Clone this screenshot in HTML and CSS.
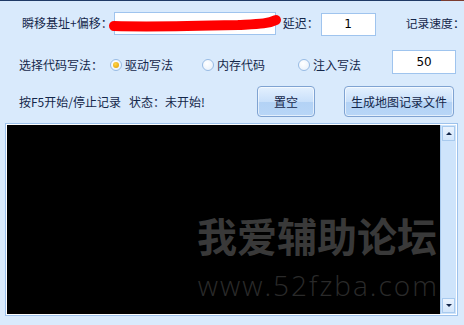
FILE: index.html
```html
<!DOCTYPE html>
<html lang="zh-CN">
<head>
  <meta charset="UTF-8">
  <title>记录工具</title>
  <link rel="stylesheet" href="styles.css">
</head>
<body>
  <div class="topline"><span class="left"></span><span class="right"></span></div>

  <div class="row row-one">
    <label class="lbl lbl-addr">瞬移基址+偏移：</label>
    <div class="addr-wrap">
      <input class="box box-addr" type="text" value="">
      <svg class="scribble" width="176" height="24" viewBox="0 0 176 24">
        <path d="M6 14 C40 15 90 14 130 13 C150 12 160 12 168 8" fill="none" stroke="#ff0000" stroke-width="10" stroke-linecap="round"/>
      </svg>
    </div>
    <label class="lbl lbl-delay">延迟：</label>
    <input class="box box-delay" type="text" value="1">
    <label class="lbl lbl-speed">记录速度：</label>
  </div>

  <div class="row row-two">
    <label class="lbl lbl-mode">选择代码写法：</label>
    <span class="radio checked"></span><span class="lbl opt">驱动写法</span>
    <span class="radio r2"></span><span class="lbl opt">内存代码</span>
    <span class="radio r3"></span><span class="lbl opt">注入写法</span>
    <input class="box box-speed" type="text" value="50">
  </div>

  <div class="row row-three">
    <span class="lbl lbl-hint">按F5开始/停止记录</span>
    <span class="lbl lbl-state">状态：未开始!</span>
    <button class="btn btn-clear">置空</button>
    <button class="btn btn-make">生成地图记录文件</button>
  </div>

  <div class="log">
    <div class="log-body">
      <div class="mark-cn">我爱辅助论坛</div>
      <div class="mark-url">www.52fzba.com</div>
    </div>
    <div class="scroll">
      <span class="sbtn up"><i></i></span>
      <span class="sbtn down"><i></i></span>
    </div>
  </div>
</body>
</html>
```

FILE: styles.css
```css
html, body {
  margin: 0;
  padding: 0;
}

body {
  width: 464px;
  height: 325px;
  overflow: hidden;
  background: #d9eafc;
  color: #14274a;
  font-family: "Noto Sans CJK JP", "Noto Sans CJK SC", "DejaVu Sans", sans-serif;
  font-size: 12px;
  white-space: nowrap;
}

.topline {
  display: flex;
  height: 1px;
}

.topline .left {
  width: 441px;
  background: #1f3a66;
}

.topline .right {
  flex: 1;
  background: #7b3c30;
}

.row {
  display: flex;
  align-items: center;
}

.lbl {
  line-height: 16px;
}

.box {
  box-sizing: border-box;
  height: 23px;
  border: 1px solid #9fc4ee;
  background: #fff;
  padding: 0;
  margin: 0;
  font-family: "DejaVu Sans", sans-serif;
  font-size: 12px;
  color: #000;
  text-align: center;
  outline: none;
}

/* row one */
.row-one {
  margin-top: 10px;
  height: 24px;
  padding-left: 22px;
}

.addr-wrap {
  position: relative;
  margin-left: 1px;
}

.box-addr {
  display: block;
  width: 162px;
}

.scribble {
  position: absolute;
  left: -6px;
  top: 0;
}

.lbl-delay {
  margin-left: 7px;
}

.box-delay {
  margin-left: 2px;
  width: 55px;
  margin-top: 2px;
}

.lbl-speed {
  margin-left: 30px;
  font-size: 11.8px;
}

/* row two */
.row-two {
  margin-top: 15px;
  height: 24px;
  padding-left: 19px;
}

.lbl-mode {
  width: 91px;
  margin-top: 6px;
}

.radio {
  box-sizing: border-box;
  width: 12px;
  height: 12px;
  border-radius: 50%;
  border: 1px solid #98bbe4;
  background: radial-gradient(circle at 40% 35%, #ffffff, #e4eefa);
  margin-top: 6px;
  display: flex;
  align-items: center;
  justify-content: center;
}

.radio.checked::after {
  content: "";
  width: 6px;
  height: 6px;
  border-radius: 50%;
  background: radial-gradient(circle at 40% 35%, #ffd54a, #e09a00);
}

.opt {
  margin-left: 3px;
  margin-top: 6px;
}

.r2 {
  margin-left: 29px;
}

.r3 {
  margin-left: 33px;
}

.box-speed {
  margin-left: 31px;
  width: 64px;
  height: 24px;
  font-size: 12px;
}

/* row three */
.row-three {
  margin-top: 12px;
  height: 31px;
  padding-left: 19px;
}

.lbl-hint {
  margin-top: 1px;
}

.lbl-state {
  margin-left: 8px;
  margin-top: 1px;
}

.btn {
  box-sizing: border-box;
  height: 31px;
  border: 1px solid #7fa3d2;
  border-radius: 4px;
  background: linear-gradient(#e3f0fe 0%, #c9e0fa 50%, #b3d2f5 51%, #b8d6f7 100%);
  color: #14274a;
  font-family: "Noto Sans CJK JP", "Noto Sans CJK SC", sans-serif;
  font-size: 12px;
  padding: 0;
  box-shadow: inset 0 0 0 1px rgba(255, 255, 255, 0.6);
}

.btn-clear {
  width: 58px;
  margin-left: 52px;
}

.btn-make {
  width: 110px;
  margin-left: 29px;
}

/* log area */
.log {
  box-sizing: border-box;
  display: flex;
  margin: 6px 0 0 5px;
  width: 453px;
  height: 193px;
  border: 1px solid #9dc2ec;
  background: #fff;
  padding: 1px;
}

.log-body {
  flex: 1;
  background: #000;
  display: flex;
  flex-direction: column;
  align-items: flex-end;
  padding: 88px 3px 0 0;
}

.mark-cn {
  font-family: "Noto Sans CJK SC", sans-serif;
  font-weight: 700;
  font-size: 40px;
  line-height: 44px;
  color: #393939;
}

.mark-url {
  font-family: "Open Sans", "DejaVu Sans", sans-serif;
  font-weight: 300;
  font-size: 28px;
  line-height: 32px;
  letter-spacing: 2px;
  margin-top: 12px;
  margin-right: -2px;
  color: #2a2a2a;
}

.scroll {
  box-sizing: border-box;
  width: 16px;
  background: #cee4fb;
  border-left: 1px solid #a8caee;
  display: flex;
  flex-direction: column;
  justify-content: space-between;
  padding: 1px;
}

.sbtn {
  box-sizing: border-box;
  height: 15px;
  border: 1px solid #a8caee;
  background: linear-gradient(#eaf3fe, #d3e6fb);
  display: flex;
  align-items: center;
  justify-content: center;
}

.sbtn i {
  width: 0;
  height: 0;
  border-left: 3px solid transparent;
  border-right: 3px solid transparent;
}

.sbtn.up i {
  border-bottom: 3px solid #14274a;
}

.sbtn.down i {
  border-top: 3px solid #14274a;
}
```
